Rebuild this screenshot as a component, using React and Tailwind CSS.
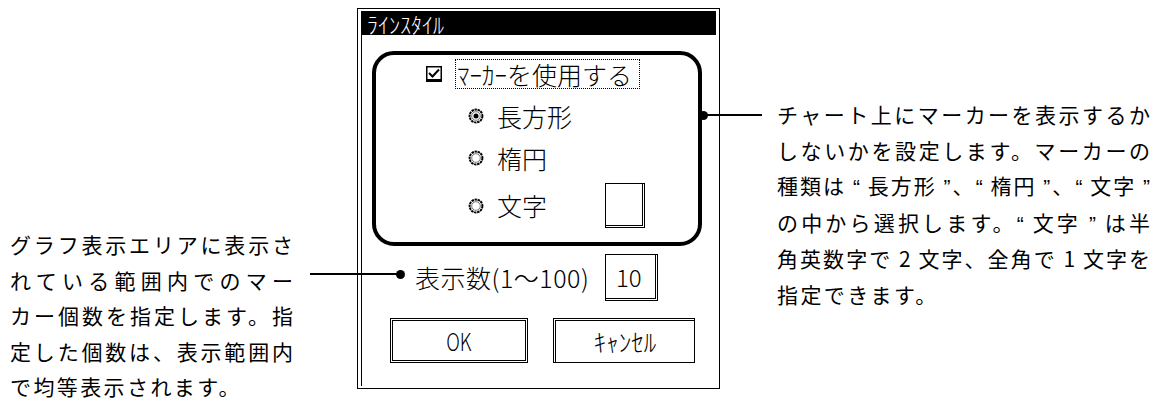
import React from "react";

const leftLines = [
  "グラフ表示エリアに表示さ",
  "れている範囲内でのマー",
  "カー個数を指定します。指",
  "定した個数は、表示範囲内",
  "で均等表示されます。",
];

const rightLines = [
  "チャート上にマーカーを表示するか",
  "しないかを設定します。マーカーの",
  "種類は “ 長方形 ”、“ 楕円 ”、“ 文字 ”",
  "の中から選択します。“ 文字 ” は半",
  "角英数字で 2 文字、全角で 1 文字を",
  "指定できます。",
];

// quotes in a latin face so they stay narrow
function Rich({ text }) {
  return text.split(/([“”])/).map((p, i) =>
    p === "“" || p === "”" ? (
      <span key={i} className="font-['Liberation_Sans']">{p}</span>
    ) : (
      p
    )
  );
}

function Note({ lines, width }) {
  return lines.map((l, i) =>
    i < lines.length - 1 ? (
      <div key={i} className={"tracking-[1px] [text-align-last:justify] text-justify " + width}>
        <Rich text={l} />
      </div>
    ) : (
      <div key={i} className="tracking-[2.4px] whitespace-nowrap">
        <Rich text={l} />
      </div>
    )
  );
}

function CheckBox() {
  return (
    <svg width="16" height="16" viewBox="0 0 16 16" className="shrink-0">
      <rect x="0.75" y="0.75" width="14.5" height="13" fill="white" stroke="black" strokeWidth="1.5" />
      <rect x="0" y="14" width="16" height="2" fill="black" />
      <path d="M3 7 L6.5 10.5 L13 3.5" fill="none" stroke="black" strokeWidth="2" />
    </svg>
  );
}

function Radio({ on }) {
  return (
    <svg width="16" height="16" viewBox="0 0 16 16" className="shrink-0">
      <circle cx="8" cy="8" r="6.4" fill="white" stroke="black" strokeWidth="2" strokeDasharray="2.4 0.7" />
      <circle cx="8" cy="8" r="4.3" fill="none" stroke="#666" strokeWidth="0.9" />
      {on && <circle cx="8" cy="8" r="2.5" fill="black" />}
    </svg>
  );
}

function Dot({ className }) {
  return <div className={"absolute w-[9px] h-[9px] rounded-full bg-black " + className} />;
}

export default function App() {
  return (
    <div
      className="relative w-[1159px] h-[401px] bg-white overflow-hidden text-black"
      style={{ fontFamily: '"Noto Sans CJK JP", "Noto Sans", sans-serif' }}
    >
      <div className="flex items-start">
        {/* left note */}
        <div className="w-[357px] shrink-0 pl-[10px] pt-[227px] text-[21px] leading-[35.5px]">
          <Note lines={leftLines} width="w-[284px]" />
        </div>

        {/* dialog */}
        <div className="w-[363px] h-[381px] mt-[8px] shrink-0 border border-black pt-[2px] pr-[3px] pb-[2px] pl-[3px]">
          <div className="h-full border-l border-black flex flex-col">
            <div className="h-[24px] bg-black text-white text-[22px] leading-[24px] pl-[5px] font-light">
              ﾗｲﾝｽﾀｲﾙ
            </div>

            <div className="ml-[10px] mt-[16px] w-[330px] h-[195px] border-4 border-black rounded-[22px] flex flex-col text-[25px] font-light">
              <div className="mt-[4px] h-[30px] pl-[50px] flex items-center">
                <CheckBox />
                <div className="ml-[13px] w-[185px] h-[30px] border border-dotted border-black flex items-center leading-none pl-[1px]">
                  ﾏｰｶｰを使用する
                </div>
              </div>
              <div className="mt-[12px] h-[30px] pl-[92px] flex items-center gap-[13px] leading-none">
                <Radio on />
                <span>長方形</span>
              </div>
              <div className="mt-[12px] h-[30px] pl-[92px] flex items-center gap-[13px] leading-none">
                <Radio />
                <span>楕円</span>
              </div>
              <div className="mt-[10px] h-[45px] pl-[92px] pr-[53px] flex items-center leading-none">
                <div className="flex items-center gap-[13px]">
                  <Radio />
                  <span>文字</span>
                </div>
                <div className="ml-auto w-[40px] h-[45px] border border-r-[3px] border-b-[3px] border-double border-black" />
              </div>
            </div>

            <div className="mt-[8px] h-[47px] pl-[53px] flex items-center text-[25px] font-light leading-none">
              <span className="w-[190px] whitespace-nowrap tracking-[0.5px]">表示数(1〜100)</span>
              <div className="w-[53px] h-[47px] border border-r-[3px] border-b-[3px] border-double border-black flex items-center pl-[10px] text-[24px]">
                10
              </div>
            </div>

            <div className="mt-[17px] pl-[28px] flex gap-[25px] text-[25px] font-light leading-none">
              <div className="w-[138px] h-[45px] border-[3px] border-double border-black flex items-center justify-center">
                <span className="inline-block scale-x-75">OK</span>
              </div>
              <div className="w-[142px] h-[45px] border-t-[3px] border-l-[3px] border-r border-b border-double border-black flex items-center justify-center">
                ｷｬﾝｾﾙ
              </div>
            </div>
          </div>
        </div>

        {/* right note */}
        <div className="ml-[57px] pt-[97px] text-[21px] leading-[35.5px]">
          <Note lines={rightLines} width="w-[374px]" />
        </div>
      </div>

      {/* callout lines */}
      <div className="absolute left-[703px] top-[114px] w-[59px] h-[2px] bg-black" />
      <Dot className="left-[699px] top-[111px]" />
      <div className="absolute left-[310px] top-[273px] w-[90px] h-[2px] bg-black" />
      <Dot className="left-[396px] top-[270px]" />
    </div>
  );
}
